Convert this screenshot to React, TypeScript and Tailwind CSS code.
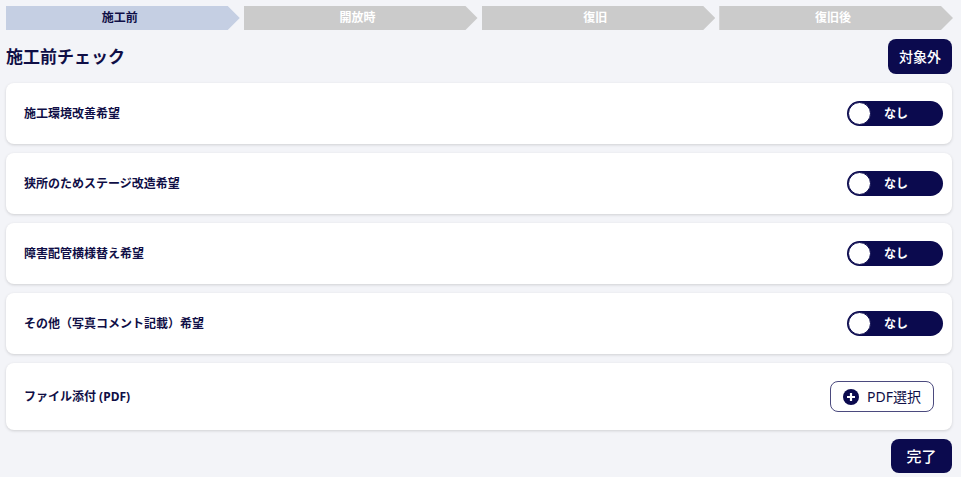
import React from 'react';

const font = { fontFamily: '"Noto Sans", "Noto Sans CJK JP", sans-serif' };

const STEPS = ['施工前', '開放時', '復旧', '復旧後'];

const ITEMS = [
  '施工環境改善希望',
  '狭所のためステージ改造希望',
  '障害配管横様替え希望',
  'その他（写真コメント記載）希望',
];

const Toggle: React.FC = () => (
  <div className="relative flex h-[25px] w-[96px] items-center rounded-full bg-[#0b0a4e]">
    <span className="absolute left-[1px] top-[1px] h-[23px] w-[23px] rounded-full border border-[#0b0a4e] bg-white" />
    <span className="flex-1 pl-[2px] text-center text-[12px] font-bold text-white">なし</span>
  </div>
);

const App: React.FC = () => {
  return (
    <div className="min-h-[477px] bg-[#f3f4f8] pl-[6px] pr-[8px] pt-[6px] text-[#0f0e46]" style={font}>
      {/* stepper */}
      <div className="flex gap-[4px]">
        {STEPS.map((s, i) => (
          <div
            key={s}
            className={
              'flex h-[24px] flex-1 items-center justify-center pr-[6px] text-[12px] font-bold [clip-path:polygon(0_0,calc(100%-12px)_0,100%_50%,calc(100%-12px)_100%,0_100%)] ' +
              (i === 0 ? 'bg-[#c5cfe3] text-[#0f0e46]' : 'bg-[#cbcbcb] text-white')
            }
          >
            {s}
          </div>
        ))}
      </div>

      <div className="mt-[9px] flex items-center justify-between pr-[1px]">
        <h1 className="text-[17px] font-bold leading-none">施工前チェック</h1>
        <button className="h-[35px] w-[64px] rounded-lg bg-[#0b0a4e] text-[14px] font-medium text-white">対象外</button>
      </div>

      <div className="mt-[9px] flex flex-col gap-[9px] pr-[1px]">
        {ITEMS.map((t) => (
          <div
            key={t}
            className="flex h-[61px] items-center justify-between rounded-lg bg-white pl-[18px] pr-[9px] shadow-[0_1px_3px_rgba(0,0,0,0.15)]"
          >
            <span className="text-[12px] font-bold">{t}</span>
            <Toggle />
          </div>
        ))}
        <div className="flex h-[67px] items-center justify-between rounded-lg bg-white pl-[18px] pr-[18px] shadow-[0_1px_3px_rgba(0,0,0,0.15)]">
          <span className="text-[12px] font-bold">ファイル添付 (PDF)</span>
          <button className="flex h-[31px] w-[104px] items-center justify-center gap-[8px] rounded-lg border border-[#4b4a7e] bg-white text-[14px] text-[#0f0e46]">
            <svg width="16" height="16" viewBox="0 0 16 16">
              <circle cx="8" cy="8" r="8" fill="#0b0a4e" />
              <path d="M8 4v8M4 8h8" stroke="white" strokeWidth="2.2" />
            </svg>
            PDF選択
          </button>
        </div>
      </div>

      <div className="mt-[9px] flex justify-end pr-[1px]">
        <button className="h-[34px] w-[61px] rounded-lg bg-[#0b0a4e] text-[15px] font-medium text-white">完了</button>
      </div>
    </div>
  );
};

export default App;
